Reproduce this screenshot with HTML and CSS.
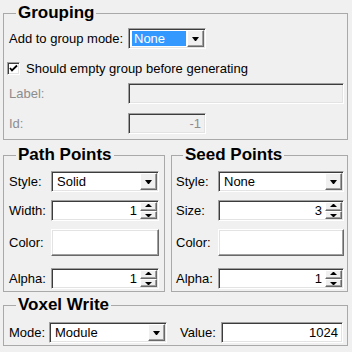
FILE: index.html
```html
<!DOCTYPE html>
<html lang="en">
<head>
  <meta charset="UTF-8">
  <title>Group options</title>
  <link rel="stylesheet" href="styles.css">
</head>
<body>
  <fieldset class="box grouping">
    <legend>Grouping</legend>
    <div class="row first">
      <span class="lbl">Add to group mode:</span>
      <div class="combo sunken w-mode">
        <span class="val selected">None</span>
        <span class="drop"></span>
      </div>
    </div>
    <div class="row check-row">
      <span class="check">
        <svg width="13" height="13" viewBox="0 0 13 13">
          <path d="M3 6 L5 8.5 L10 3.5" fill="none" stroke="#000" stroke-width="1.8"/>
        </svg>
      </span>
      <span>Should empty group before generating</span>
    </div>
    <div class="row tight">
      <span class="lbl off">Label:</span>
      <div class="field sunken off-field grow"></div>
    </div>
    <div class="row">
      <span class="lbl off">Id:</span>
      <div class="field sunken off-field w-id"><span class="num off">-1</span></div>
    </div>
  </fieldset>

  <div class="pair">
    <fieldset class="box path">
      <legend>Path Points</legend>
      <div class="row first">
        <span class="lbl">Style:</span>
        <div class="combo sunken grow"><span class="val">Solid</span><span class="drop"></span></div>
      </div>
      <div class="row">
        <span class="lbl">Width:</span>
        <div class="spin sunken grow"><span class="num">1</span><span class="arrows"><i class="up"></i><i class="down"></i></span></div>
      </div>
      <div class="row color-row">
        <span class="lbl">Color:</span>
        <div class="colorbtn grow"></div>
      </div>
      <div class="row after-color">
        <span class="lbl">Alpha:</span>
        <div class="spin sunken grow"><span class="num">1</span><span class="arrows"><i class="up"></i><i class="down"></i></span></div>
      </div>
    </fieldset>

    <fieldset class="box seed">
      <legend>Seed Points</legend>
      <div class="row first">
        <span class="lbl">Style:</span>
        <div class="combo sunken grow"><span class="val">None</span><span class="drop"></span></div>
      </div>
      <div class="row">
        <span class="lbl">Size:</span>
        <div class="spin sunken grow"><span class="num">3</span><span class="arrows"><i class="up"></i><i class="down"></i></span></div>
      </div>
      <div class="row color-row">
        <span class="lbl">Color:</span>
        <div class="colorbtn grow"></div>
      </div>
      <div class="row after-color">
        <span class="lbl">Alpha:</span>
        <div class="spin sunken grow"><span class="num">1</span><span class="arrows"><i class="up"></i><i class="down"></i></span></div>
      </div>
    </fieldset>
  </div>

  <fieldset class="box voxel">
    <legend>Voxel Write</legend>
    <div class="row first">
      <span class="lbl mode-lbl">Mode:</span>
      <div class="combo sunken w-vox"><span class="val">Module</span><span class="drop"></span></div>
      <span class="lbl value-lbl">Value:</span>
      <div class="field sunken grow"><span class="num">1024</span></div>
    </div>
  </fieldset>
</body>
</html>
```

FILE: styles.css
```css
body {
  margin: 0;
  padding: 0 4px 0 3px;
  background: #f0f0f0;
  font-family: "Liberation Sans", Arial, sans-serif;
  font-size: 13px;
  color: #000;
}

/* group boxes */
.box {
  margin: 0;
  padding: 0;
  min-width: 0;
  border: 1px solid #a9a9a9;
}
.box legend {
  margin-left: 7px;
  padding: 0 2px;
  font-size: 17px;
  font-weight: bold;
  line-height: 20px;
}
.grouping {
  margin-top: 3px;
  padding: 0 3px 5px 5px;
}
.pair {
  display: flex;
  gap: 6px;
  margin-top: 5px;
}
.path {
  width: 162px;
  box-sizing: border-box;
  padding: 0 5px 2px 5px;
}
.seed {
  flex: 1;
  padding: 0 3px 2px 4px;
}
.voxel {
  margin-top: 3px;
  padding: 0 4px 2px 5px;
}

/* rows */
.row {
  display: flex;
  align-items: center;
  height: 21px;
  margin-top: 8px;
}
.grouping .row { margin-top: 9px; }
.grouping .row.first { margin-top: 5px; }
.grouping .row.tight { margin-top: 4px; }
.path .row.first, .seed .row.first { margin-top: 6px; }
.voxel .row.first { margin-top: 7px; }
.row.color-row { height: 27px; }
.row.after-color { margin-top: 12px; }

.lbl {
  flex-shrink: 0;
  white-space: nowrap;
}
.grouping .lbl { width: 119px; }
.path .lbl, .seed .lbl { width: 42px; }
.mode-lbl { width: 40px; }
.value-lbl { width: 41px; margin-left: 13px; }
.off { color: #8d8d8d; }
.grow { flex: 1; }

/* sunken controls */
.sunken {
  box-sizing: border-box;
  height: 21px;
  border: 1px solid;
  border-color: #a0a0a0 #fff #fff #a0a0a0;
  box-shadow: inset 1px 1px #3c3c3c, inset -1px -1px #e3e3e3;
  background: #fff;
}
.off-field { background: #f0f0f0; }
.field, .spin, .combo {
  display: flex;
  align-items: center;
  padding: 1px;
}
.w-mode { width: 78px; }
.w-id { width: 78px; }
.w-vox { width: 118px; }

.combo .val {
  flex: 1;
  align-self: stretch;
  display: flex;
  align-items: center;
  padding-left: 2px;
  margin: 1px 1px 1px 2px;
}
.combo .val.selected {
  background: #3399ff;
  color: #fff;
}
.drop, .arrows i {
  position: relative;
  box-sizing: border-box;
  background: #f0f0f0;
  border: 1px solid;
  border-color: #fff #696969 #696969 #fff;
  box-shadow: inset -1px -1px #a0a0a0;
}
.drop {
  width: 17px;
  height: 17px;
  flex-shrink: 0;
}
.drop::after {
  content: "";
  position: absolute;
  left: 4px;
  top: 6px;
  width: 1px;
  border: 3px solid transparent;
  border-top: 4px solid #000;
  border-bottom: 0;
}

/* numbers and spinners */
.num {
  flex: 1;
  text-align: right;
  padding-right: 3px;
}
.field .num { padding-right: 3px; }
.arrows {
  display: flex;
  flex-direction: column;
  width: 17px;
  height: 17px;
  flex-shrink: 0;
}
.arrows i {
  flex: 1;
  display: block;
}
.arrows i::after {
  content: "";
  position: absolute;
  left: 4px;
  width: 1px;
  border: 3px solid transparent;
}
.arrows .up::after {
  top: 1px;
  border-bottom: 3px solid #000;
  border-top: 0;
}
.arrows .down::after {
  top: 2px;
  border-top: 3px solid #000;
  border-bottom: 0;
}

/* colour button */
.colorbtn {
  box-sizing: border-box;
  height: 27px;
  background: #fff;
  border: 1px solid;
  border-color: #fff #696969 #696969 #fff;
  box-shadow: inset -1px -1px #a0a0a0, inset 1px 1px #e3e3e3;
}

/* checkbox */
.check-row span + span { margin-left: 6px; }
.check {
  display: block;
  width: 13px;
  height: 13px;
  margin-left: -2px;
  box-sizing: border-box;
  border: 1px solid;
  border-color: #a0a0a0 #fff #fff #a0a0a0;
  box-shadow: inset 1px 1px #3c3c3c, inset -1px -1px #e3e3e3;
  background: #fff;
}
.check svg {
  display: block;
  margin: -1px;
}
```
